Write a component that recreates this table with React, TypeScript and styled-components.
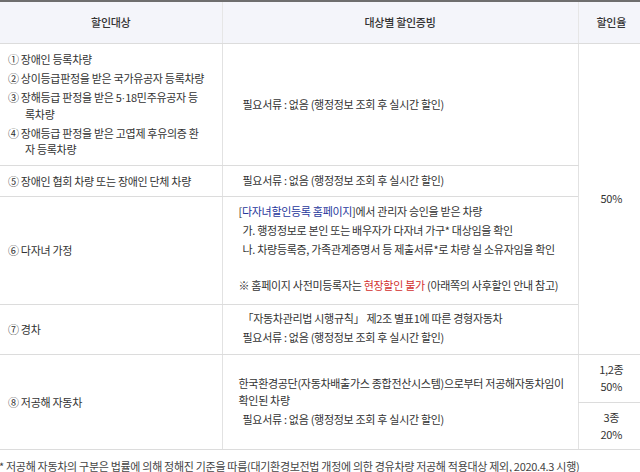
import React from "react";
import styled, { createGlobalStyle } from "styled-components";

const GlobalStyle = createGlobalStyle`
  html, body {
    margin: 0;
    padding: 0;
    overflow: hidden;
    background: #fff;
  }
  body {
    font-family: "Noto Sans CJK KR", "Noto Sans", sans-serif;
    font-size: 11px;
    letter-spacing: -0.3px;
    color: #333;
  }
`;

const rows = {
  header: 42,
  disabled: 122,
  group: 31,
  multi: 108,
  light: 50,
  ecoTop: 48,
  ecoBottom: 47,
};

export default function App() {
  return (
    <Page>
      <GlobalStyle />
      <Table>
        <colgroup>
          <col style={{ width: 222 }} />
          <col style={{ width: 356 }} />
          <col style={{ width: 66 }} />
        </colgroup>
        <thead>
          <Row $h={rows.header}>
            <HeadCell>할인대상</HeadCell>
            <HeadCell>대상별 할인증빙</HeadCell>
            <HeadCell>할인율</HeadCell>
          </Row>
        </thead>
        <tbody>
          <Row $h={rows.disabled}>
            <TargetCell>
              <Item>① 장애인 등록차량</Item>
              <Item>② 상이등급판정을 받은 국가유공자 등록차량</Item>
              <Item>
                ③ 장해등급 판정을 받은 5<Dot>·</Dot>18민주유공자 등록차량
              </Item>
              <Item>④ 장애등급 판정을 받은 고엽제 후유의증 환자 등록차량</Item>
            </TargetCell>
            <ProofCell>
              <Line $indent>필요서류 : 없음 (행정정보 조회 후 실시간 할인)</Line>
            </ProofCell>
            <RateCell rowSpan={4}>50%</RateCell>
          </Row>
          <Row $h={rows.group}>
            <TargetCell>
              <Item>⑤ 장애인 협회 차량 또는 장애인 단체 차량</Item>
            </TargetCell>
            <ProofCell>
              <Line $indent>필요서류 : 없음 (행정정보 조회 후 실시간 할인)</Line>
            </ProofCell>
          </Row>
          <Row $h={rows.multi}>
            <TargetCell>
              <Item>⑥ 다자녀 가정</Item>
            </TargetCell>
            <ProofCell $lift={4}>
              <Line>
                [<Blue>다자녀할인등록 홈페이지</Blue>]에서 관리자 승인을 받은 차량
              </Line>
              <Line $indent>가. 행정정보로 본인 또는 배우자가 다자녀 가구* 대상임을 확인</Line>
              <Line $indent>나. 차량등록증, 가족관계증명서 등 제출서류*로 차량 실 소유자임을 확인</Line>
              <Blank />
              <Line>
                ※ 홈페이지 사전미등록자는 <Red>현장할인 불가</Red> (아래쪽의 사후할인 안내 참고)
              </Line>
            </ProofCell>
          </Row>
          <Row $h={rows.light}>
            <TargetCell>
              <Item>⑦ 경차</Item>
            </TargetCell>
            <ProofCell $lift={2}>
              <Line $indent>「자동차관리법 시행규칙」 제2조 별표1에 따른 경형자동차</Line>
              <Line $indent>필요서류 : 없음 (행정정보 조회 후 실시간 할인)</Line>
            </ProofCell>
          </Row>
          <Row $h={rows.ecoTop}>
            <TargetCell rowSpan={2}>
              <Item>⑧ 저공해 자동차</Item>
            </TargetCell>
            <ProofCell rowSpan={2}>
              <Line>
                한국환경공단(자동차배출가스 종합전산시스템)으로부터 저공해자동차임이
                <br />
                확인된 차량
              </Line>
              <Line $indent>필요서류 : 없음 (행정정보 조회 후 실시간 할인)</Line>
            </ProofCell>
            <RateCell>
              1,2종
              <br />
              50%
            </RateCell>
          </Row>
          <Row $h={rows.ecoBottom}>
            <RateCell>
              3종
              <br />
              20%
            </RateCell>
          </Row>
        </tbody>
      </Table>
      <Note>
        * 저공해 자동차의 구분은 법률에 의해 정해진 기준을 따름(대기환경보전법 개정에 의한 경유차량
        저공해 적용대상 제외, 2020.4.3 시행)
      </Note>
    </Page>
  );
}

const Page = styled.div`
  width: 640px;
  height: 472px;
  overflow: hidden;
`;

const Table = styled.table`
  width: 644px;
  table-layout: fixed;
  border-collapse: collapse;
  border-top: 2px solid #6e6e6e;
`;

const Row = styled.tr<{ $h: number }>`
  height: ${(p) => p.$h}px;
`;

const HeadCell = styled.th`
  background: #f4f5fa;
  font-weight: 500;
  font-size: 11px;
  color: #333;
  text-align: center;
  vertical-align: middle;
  padding: 0;
  border-bottom: 1px solid #dcdcdc;
  border-left: 1px solid #e6e6e6;
  &:first-child {
    border-left: none;
  }
`;

const BodyCell = styled.td`
  padding: 0;
  vertical-align: middle;
  border-bottom: 1px solid #dcdcdc;
  border-left: 1px solid #e2e2e2;
  line-height: 17px;
`;

const TargetCell = styled(BodyCell)`
  border-left: none;
  padding: 0 16px 0 8px;
`;

const ProofCell = styled(BodyCell)<{ $lift?: number }>`
  padding: 0 8px ${(p) => p.$lift ?? 0}px 16px;
`;

const RateCell = styled(BodyCell)`
  text-align: center;
`;

const Item = styled.p`
  margin: 0;
  padding-left: 17px;
  text-indent: -17px;
  line-height: 16px;
  & + & {
    margin-top: 3px;
  }
`;

const Dot = styled.span`
  font-family: "Liberation Sans", sans-serif;
  letter-spacing: 0;
`;

const Line = styled.p<{ $indent?: boolean }>`
  margin: 0;
  padding-left: ${(p) => (p.$indent ? 4 : 0)}px;
  line-height: 17px;
  & + & {
    margin-top: 2px;
  }
`;

const Blank = styled.div`
  height: 19px;
`;

const Blue = styled.span`
  color: #27379c;
`;

const Red = styled.span`
  color: #d3302e;
`;

const Note = styled.p`
  margin: 8px 0 0 -1px;
  font-size: 11px;
  color: #444;
  white-space: nowrap;
`;
